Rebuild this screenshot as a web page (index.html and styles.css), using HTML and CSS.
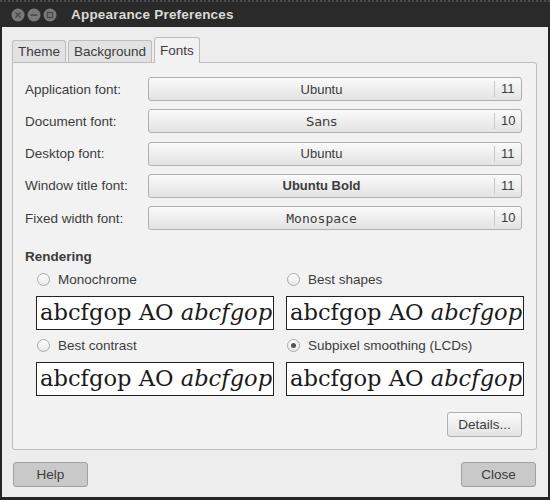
FILE: index.html
```html
<!DOCTYPE html>
<html>
<head>
<meta charset="utf-8">
<link rel="stylesheet" href="styles.css">
</head>
<body>
<div class="window">
  <div class="titlebar">
    <div class="wbtns">
      <span class="wbtn"><svg width="14" height="14" viewBox="0 0 14 14"><circle cx="7" cy="7" r="6.5" fill="#7a7a7a"/><path d="M4.5 4.5 L9.5 9.5 M9.5 4.5 L4.5 9.5" stroke="#4a4a4a" stroke-width="1.6"/></svg></span>
      <span class="wbtn"><svg width="14" height="14" viewBox="0 0 14 14"><circle cx="7" cy="7" r="6.5" fill="#7a7a7a"/><path d="M3.5 7 H10.5" stroke="#4a4a4a" stroke-width="1.6"/></svg></span>
      <span class="wbtn"><svg width="14" height="14" viewBox="0 0 14 14"><circle cx="7" cy="7" r="6.5" fill="#7a7a7a"/><rect x="4.5" y="4.5" width="5" height="5" fill="none" stroke="#4a4a4a" stroke-width="1.4"/></svg></span>
    </div>
    <div class="title">Appearance Preferences</div>
  </div>
  <div class="content">
    <div class="tabs">
      <div class="tab">Theme</div>
      <div class="tab">Background</div>
      <div class="tab active">Fonts</div>
    </div>
    <div class="panel">
      <div class="fontgrid">
        <div class="label">Application font:</div>
        <div class="fbtn"><span class="fname ubuntu">Ubuntu</span><span class="fsize">11</span></div>
        <div class="label">Document font:</div>
        <div class="fbtn"><span class="fname sans">Sans</span><span class="fsize">10</span></div>
        <div class="label">Desktop font:</div>
        <div class="fbtn"><span class="fname ubuntu">Ubuntu</span><span class="fsize">11</span></div>
        <div class="label">Window title font:</div>
        <div class="fbtn"><span class="fname ubuntu bold">Ubuntu Bold</span><span class="fsize">11</span></div>
        <div class="label">Fixed width font:</div>
        <div class="fbtn"><span class="fname mono">Monospace</span><span class="fsize">10</span></div>
      </div>
      <div class="heading">Rendering</div>
      <div class="render">
        <div class="opt">
          <div class="radio"><span class="dot"></span>Monochrome</div>
          <div class="preview">abcfgop AO <i>abcfgop</i></div>
        </div>
        <div class="opt">
          <div class="radio"><span class="dot"></span>Best shapes</div>
          <div class="preview">abcfgop AO <i>abcfgop</i></div>
        </div>
        <div class="opt">
          <div class="radio"><span class="dot"></span>Best contrast</div>
          <div class="preview">abcfgop AO <i>abcfgop</i></div>
        </div>
        <div class="opt">
          <div class="radio"><span class="dot on"></span>Subpixel smoothing (LCDs)</div>
          <div class="preview">abcfgop AO <i>abcfgop</i></div>
        </div>
      </div>
      <div class="details-row"><div class="btn">Details...</div></div>
    </div>
    <div class="actions">
      <div class="btn dark">Help</div>
      <div class="btn dark">Close</div>
    </div>
  </div>
</div>
</body>
</html>
```
FILE: styles.css
```css
html, body {
  margin: 0;
  padding: 0;
}
body {
  width: 550px;
  height: 500px;
  background: #252525;
  font-family: "Liberation Sans", Arial, sans-serif;
  font-size: 13px;
  color: #3c3c3c;
  overflow: hidden;
}
.window {
  width: 550px;
  height: 500px;
  display: flex;
  flex-direction: column;
}
.titlebar {
  height: 27px;
  flex: none;
  display: flex;
  align-items: center;
  background: #2a2a2a;
  border-top: 2px dotted #4c4c4c;
  box-sizing: border-box;
}
.wbtns {
  display: flex;
  gap: 2px;
  margin-left: 11px;
}
.wbtn {
  display: flex;
}
.title {
  margin-left: 14px;
  color: #dcdad5;
  font-family: "Liberation Sans", Arial, sans-serif;
  font-weight: bold;
  font-size: 13.5px;
  letter-spacing: 0.2px;
}
.content {
  flex: 1;
  margin: 0 2px 3px 2px;
  background: #ededed;
  padding: 10px 11px 0 10px;
  display: flex;
  flex-direction: column;
}
.tabs {
  display: flex;
  align-items: flex-end;
  gap: 2px;
  height: 25px;
  position: relative;
  z-index: 1;
}
.tab {
  height: 22px;
  box-sizing: border-box;
  padding: 3px 5px 0;
  border: 1px solid #bdbdbd;
  border-bottom: none;
  border-radius: 3px 3px 0 0;
  background: #e2e2e2;
  color: #3c3c3c;
  font-size: 13.5px;
}
.tab.active {
  height: 26px;
  margin-bottom: -1px;
  padding-top: 5px;
  background: #f2f2f2;
}
.panel {
  height: 388px;
  box-sizing: border-box;
  border: 1px solid #bcbcbc;
  border-radius: 0 3px 3px 3px;
  background: #f2f2f2;
  padding: 14px 14px 0 12px;
}
.fontgrid {
  display: grid;
  grid-template-columns: 123px 374px;
  row-gap: 8.3px;
  align-items: center;
}
.label {
  font-size: 13.5px;
  color: #3c3c3c;
}
.fbtn {
  height: 24px;
  box-sizing: border-box;
  border: 1px solid #b0b0b0;
  border-radius: 3px;
  background: linear-gradient(#fafafa, #e3e3e3);
  display: flex;
  align-items: center;
}
.fname {
  flex: 1;
  text-align: center;
  color: #3c3c3c;
}
.fname.sans {
  font-family: "DejaVu Sans", sans-serif;
  font-size: 13px;
}
.fname.bold {
  font-weight: bold;
}
.fname.mono {
  font-family: "DejaVu Sans Mono", monospace;
  font-size: 13px;
}
.fsize {
  width: 27px;
  height: 16px;
  line-height: 16px;
  border-left: 1px solid #c8c8c8;
  padding-left: 6px;
  box-sizing: border-box;
  font-size: 13px;
}
.heading {
  margin-top: 19px;
  font-weight: bold;
  font-size: 13.5px;
  color: #3c3c3c;
}
.render {
  margin: 7px 0 0 11px;
  display: grid;
  grid-template-columns: 238px 238px;
  column-gap: 12px;
  row-gap: 7px;
}
.radio {
  height: 17px;
  display: flex;
  align-items: center;
  gap: 8px;
  font-size: 13.5px;
  color: #3c3c3c;
}
.dot {
  width: 13px;
  height: 13px;
  box-sizing: border-box;
  border: 1px solid #aaa;
  border-radius: 50%;
  background: linear-gradient(#fefefe, #e8e8e8);
  margin-left: 1px;
  position: relative;
}
.dot.on::after {
  content: "";
  position: absolute;
  left: 3px;
  top: 3px;
  width: 5px;
  height: 5px;
  border-radius: 50%;
  background: #555;
}
.preview {
  margin-top: 8px;
  height: 34px;
  box-sizing: border-box;
  border: 1px solid #222;
  background: #fff;
  color: #1a1a1a;
  font-family: "DejaVu Serif", serif;
  font-size: 22.6px;
  line-height: 30px;
  padding-left: 3px;
  white-space: nowrap;
  overflow: hidden;
}
.details-row {
  display: flex;
  justify-content: flex-end;
  margin-top: 16px;
}
.btn {
  width: 75px;
  height: 25px;
  box-sizing: border-box;
  border: 1px solid #b0b0b0;
  border-radius: 3px;
  background: linear-gradient(#fafafa, #e3e3e3);
  display: flex;
  align-items: center;
  justify-content: center;
  font-size: 13.5px;
  color: #3c3c3c;
}
.actions {
  display: flex;
  justify-content: space-between;
  margin: 12px 1px 0 1px;
}
.btn.dark {
  background: #c9c9c9;
  border-color: #a0a0a0;
}
```
